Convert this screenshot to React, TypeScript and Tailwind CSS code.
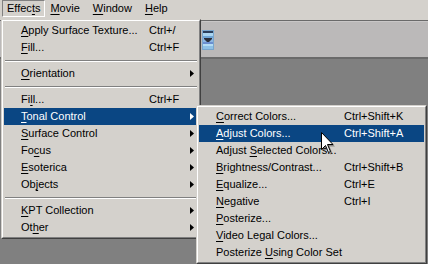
import React from "react";

type Item =
  | { sep: true }
  | { label: string; u: number; sc?: string; sub?: boolean; hi?: boolean };

const Label = ({ text, u }: { text: string; u: number }) => (
  <span className="whitespace-pre">
    {text.slice(0, u)}
    <span className="underline decoration-1 underline-offset-[2px]">{text[u]}</span>
    {text.slice(u + 1)}
  </span>
);

const Arrow = ({ white }: { white?: boolean }) => (
  <svg width="4" height="7" viewBox="0 0 4 7" className="block">
    <path d="M0 0 L4 3.5 L0 7 Z" fill={white ? "#ffffff" : "#000000"} />
  </svg>
);

const Menu = ({ items }: { items: Item[] }) => (
  <div className="border border-t-[#d4d1cc] border-l-[#d4d1cc] border-b-[#404040] border-r-[#404040]">
    <div className="border border-t-white border-l-white border-b-[#808080] border-r-[#808080] bg-[#d4d1cc] p-px">
      {items.map((it, i) =>
        "sep" in it ? (
          <div key={i} className="h-[9px] flex flex-col justify-center px-px">
            <div className="h-px bg-[#808080]" />
            <div className="h-px bg-white" />
          </div>
        ) : (
          <div
            key={i}
            className={`h-[17px] flex items-center pl-[17px] pr-[4px] ${
              it.hi ? "bg-[#0a4683] text-white" : "text-black"
            }`}
          >
            <div className="w-[128px] shrink-0">
              <Label text={it.label} u={it.u} />
            </div>
            <div className="flex-1 whitespace-pre">{it.sc ?? ""}</div>
            {it.sub ? <Arrow white={it.hi} /> : null}
          </div>
        )
      )}
    </div>
  </div>
);

const mainItems: Item[] = [
  { label: "Apply Surface Texture...", u: 0, sc: "Ctrl+/" },
  { label: "Fill...", u: 0, sc: "Ctrl+F" },
  { sep: true },
  { label: "Orientation", u: 0, sub: true },
  { sep: true },
  { label: "Fill...", u: 2, sc: "Ctrl+F" },
  { label: "Tonal Control", u: 0, sub: true, hi: true },
  { label: "Surface Control", u: 0, sub: true },
  { label: "Focus", u: 2, sub: true },
  { label: "Esoterica", u: 0, sub: true },
  { label: "Objects", u: 2, sub: true },
  { sep: true },
  { label: "KPT Collection", u: 0, sub: true },
  { label: "Other", u: 2, sub: true },
];

const subItems: Item[] = [
  { label: "Correct Colors...", u: 0, sc: "Ctrl+Shift+K" },
  { label: "Adjust Colors...", u: 0, sc: "Ctrl+Shift+A", hi: true },
  { label: "Adjust Selected Colors...", u: 7 },
  { label: "Brightness/Contrast...", u: 0, sc: "Ctrl+Shift+B" },
  { label: "Equalize...", u: 0, sc: "Ctrl+E" },
  { label: "Negative", u: 0, sc: "Ctrl+I" },
  { label: "Posterize...", u: 0 },
  { label: "Video Legal Colors...", u: 0 },
  { label: "Posterize Using Color Set", u: 10 },
];

export default function App() {
  return (
    <div className="relative w-[428px] h-[264px] overflow-hidden bg-[#808080] font-['Liberation_Sans',Arial,sans-serif] text-[11px] leading-none select-none">
      {/* menu bar */}
      <div className="h-[20px] bg-[#d4d1cc] flex items-start pl-[2px] text-black">
        <div className="h-[17px] px-[4px] flex items-center border border-t-[#808080] border-l-[#808080] border-b-white border-r-white">
          <Label text="Effects" u={5} />
        </div>
        <div className="h-[17px] px-[5px] flex items-center">
          <Label text="Movie" u={0} />
        </div>
        <div className="h-[17px] ml-[3px] px-[5px] flex items-center">
          <Label text="Window" u={0} />
        </div>
        <div className="h-[17px] ml-[3px] px-[5px] flex items-center">
          <Label text="Help" u={0} />
        </div>
      </div>
      {/* toolbar */}
      <div className="h-[39px] bg-[#bbb9b9] border-t border-t-[#6a6a6a] border-b-2 border-b-[#6a6a6a] flex items-center pl-[202px]">
        <div className="border-t border-t-[#c9c7c7] w-full h-full flex items-center">
          <svg width="12" height="20" viewBox="0 0 12 20" className="block">
            <rect x="0" y="0" width="12" height="20" fill="#7aa6cc" />
            <rect x="1" y="1" width="10" height="2" fill="#2b3f5c" />
            <rect x="1" y="3" width="10" height="3" fill="#a9d6f2" />
            <rect x="1" y="6" width="10" height="2" fill="#6fa5d6" />
            <rect x="1" y="8" width="10" height="4" fill="#8db7e2" />
            <rect x="1" y="12" width="10" height="2" fill="#6b8fd0" />
            <rect x="1" y="14" width="10" height="2" fill="#b5ddf4" />
            <rect x="1" y="16" width="10" height="3" fill="#8ec1e6" />
            <path d="M2 8 L10 8 L10 9 L7 12 L5 12 L2 9 Z" fill="#2a2f3a" />
          </svg>
        </div>
      </div>

      {/* Effects menu */}
      <div className="absolute left-[1px] top-[19px] w-[200px]">
        <Menu items={mainItems} />
      </div>

      {/* Tonal Control submenu */}
      <div className="absolute left-[196px] top-[105px] w-[231px]">
        <Menu items={subItems} />
      </div>

      {/* mouse cursor */}
      <svg
        width="16"
        height="25"
        viewBox="0 0 16 25"
        className="absolute left-[321px] top-[132px]"
      >
        <path
          d="M2.5 2.5 L2.5 19.5 L6.5 15.5 L9.5 22.5 L11.5 21.5 L8.5 14.5 L14 14.5 Z"
          fill="#000000"
          fillOpacity="0.35"
        />
        <path
          d="M0.5 0.5 L0.5 17.5 L4.5 13.5 L7.5 20.5 L9.5 19.5 L6.5 12.5 L12 12.5 Z"
          fill="#ffffff"
          stroke="#000000"
          strokeWidth="1"
        />
      </svg>
    </div>
  );
}
